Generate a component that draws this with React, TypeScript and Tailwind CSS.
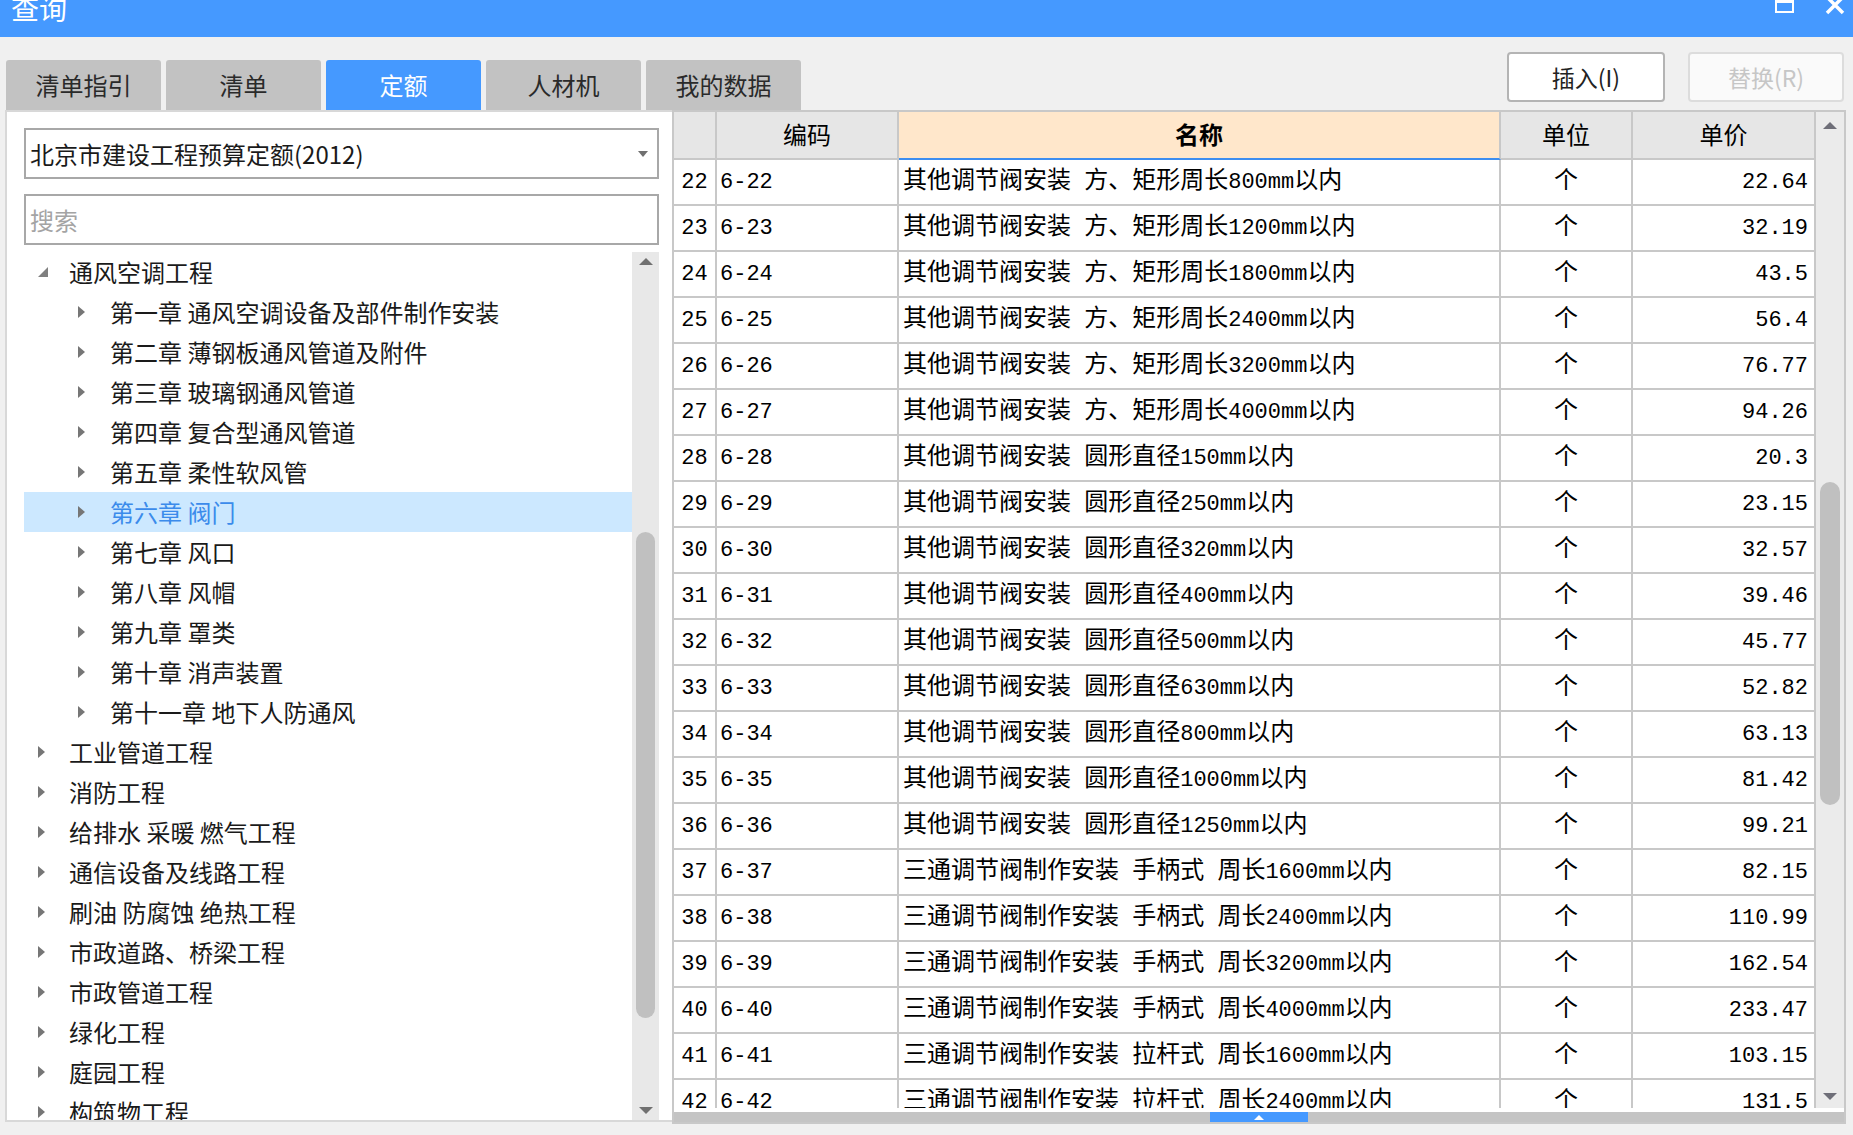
import React from "react";
import clsx from "clsx";

const TABS = ["清单指引", "清单", "定额", "人材机", "我的数据"];

type TreeNode = { label: string; level: 0 | 1; open?: boolean; selected?: boolean };

const TREE: TreeNode[] = [
  { label: "通风空调工程", level: 0, open: true },
  { label: "第一章 通风空调设备及部件制作安装", level: 1 },
  { label: "第二章 薄钢板通风管道及附件", level: 1 },
  { label: "第三章 玻璃钢通风管道", level: 1 },
  { label: "第四章 复合型通风管道", level: 1 },
  { label: "第五章 柔性软风管", level: 1 },
  { label: "第六章 阀门", level: 1, selected: true },
  { label: "第七章 风口", level: 1 },
  { label: "第八章 风帽", level: 1 },
  { label: "第九章 罩类", level: 1 },
  { label: "第十章 消声装置", level: 1 },
  { label: "第十一章 地下人防通风", level: 1 },
  { label: "工业管道工程", level: 0 },
  { label: "消防工程", level: 0 },
  { label: "给排水 采暖 燃气工程", level: 0 },
  { label: "通信设备及线路工程", level: 0 },
  { label: "刷油 防腐蚀 绝热工程", level: 0 },
  { label: "市政道路、桥梁工程", level: 0 },
  { label: "市政管道工程", level: 0 },
  { label: "绿化工程", level: 0 },
  { label: "庭园工程", level: 0 },
  { label: "构筑物工程", level: 0 },
];

const ROWS: [number, string, string][] = [
  [22, "其他调节阀安装 方、矩形周长800mm以内", "22.64"],
  [23, "其他调节阀安装 方、矩形周长1200mm以内", "32.19"],
  [24, "其他调节阀安装 方、矩形周长1800mm以内", "43.5"],
  [25, "其他调节阀安装 方、矩形周长2400mm以内", "56.4"],
  [26, "其他调节阀安装 方、矩形周长3200mm以内", "76.77"],
  [27, "其他调节阀安装 方、矩形周长4000mm以内", "94.26"],
  [28, "其他调节阀安装 圆形直径150mm以内", "20.3"],
  [29, "其他调节阀安装 圆形直径250mm以内", "23.15"],
  [30, "其他调节阀安装 圆形直径320mm以内", "32.57"],
  [31, "其他调节阀安装 圆形直径400mm以内", "39.46"],
  [32, "其他调节阀安装 圆形直径500mm以内", "45.77"],
  [33, "其他调节阀安装 圆形直径630mm以内", "52.82"],
  [34, "其他调节阀安装 圆形直径800mm以内", "63.13"],
  [35, "其他调节阀安装 圆形直径1000mm以内", "81.42"],
  [36, "其他调节阀安装 圆形直径1250mm以内", "99.21"],
  [37, "三通调节阀制作安装 手柄式 周长1600mm以内", "82.15"],
  [38, "三通调节阀制作安装 手柄式 周长2400mm以内", "110.99"],
  [39, "三通调节阀制作安装 手柄式 周长3200mm以内", "162.54"],
  [40, "三通调节阀制作安装 手柄式 周长4000mm以内", "233.47"],
  [41, "三通调节阀制作安装 拉杆式 周长1600mm以内", "103.15"],
  [42, "三通调节阀制作安装 拉杆式 周长2400mm以内", "131.5"],
];

function Caret({ dir, color = "#707070" }: { dir: "up" | "down" | "right" | "open"; color?: string }) {
  if (dir === "right")
    return (
      <svg width="8" height="12" viewBox="0 0 8 12">
        <path d="M0 0 L7 6 L0 12 Z" fill={color} />
      </svg>
    );
  if (dir === "open")
    return (
      <svg width="10" height="10" viewBox="0 0 10 10">
        <path d="M10 0 L10 10 L0 10 Z" fill={color} />
      </svg>
    );
  return (
    <svg width="14" height="7" viewBox="0 0 14 7">
      <path d={dir === "up" ? "M0 7 L7 0 L14 7 Z" : "M0 0 L14 0 L7 7 Z"} fill={color} />
    </svg>
  );
}

function TreeRow({ node }: { node: TreeNode }) {
  return (
    <div
      className={clsx(
        "h-[40px] shrink-0 flex items-center whitespace-nowrap",
        node.selected ? "bg-[#cce8ff] text-[#3b8beb]" : "text-[#1a1a1a]"
      )}
    >
      <div className={clsx("flex items-center", node.level === 0 ? "w-[45px] pl-[14px]" : "w-[86px] pl-[54px]")}>
        <Caret dir={node.open ? "open" : "right"} color={node.open ? "#808080" : "#767676"} />
      </div>
      <span className="text-[24px] leading-none">{node.label}</span>
    </div>
  );
}

// latin runs are set smaller so they take about half a CJK cell, like the grid's bitmap font
function Mixed({ text }: { text: string }) {
  return (
    <>
      {text.split(/([0-9A-Za-z. ]+)/).map((part, i) =>
        /^[0-9A-Za-z. ]+$/.test(part) ? (
          <span key={i} className="text-[22px] whitespace-pre">
            {part}
          </span>
        ) : (
          <span key={i}>{part}</span>
        )
      )}
    </>
  );
}

const CELL = "border-r-2 border-b-2 border-[#c8c8c8] flex items-center overflow-hidden whitespace-nowrap";

export default function App() {
  return (
    <div className="w-[1853px] h-[1135px] bg-[#f0f0f0] flex flex-col overflow-hidden font-['Noto_Sans_CJK_SC',sans-serif]">
      {/* title bar */}
      <div className="h-[37px] shrink-0 bg-[#4599ff] flex justify-between overflow-hidden">
        <div className="text-white text-[28px] leading-[28px] -mt-[6px] pl-[11px]">查询</div>
        <div className="flex items-start gap-[30px] pr-[7px]">
          <div className="w-[19px] h-[14px] border-2 border-t-[4px] border-white -mt-[1px]" />
          <svg width="22" height="22" viewBox="0 0 22 22" className="-mt-[6px]">
            <path d="M3 3 L19 19 M19 3 L3 19" stroke="white" strokeWidth="3.5" />
          </svg>
        </div>
      </div>

      {/* tabs + buttons */}
      <div className="h-[73px] shrink-0 flex justify-between">
        <div className="flex items-end gap-[5px] pl-[6px]">
          {TABS.map((t, i) => (
            <div
              key={t}
              className={clsx(
                "w-[155px] h-[50px] rounded-t-[3px] flex items-center justify-center text-[24px]",
                i === 2 ? "bg-[#4599ff] text-white" : "bg-[#c2c2c2] text-[#2a2a2a]"
              )}
            >
              {t}
            </div>
          ))}
        </div>
        <div className="flex items-start gap-[23px] pt-[15px] pr-[9px]">
          <button className="w-[158px] h-[50px] border-2 border-[#b4b4b4] rounded-[4px] bg-white text-[23px] text-[#222]">
            插入(I)
          </button>
          <button className="w-[156px] h-[50px] border-2 border-[#dcdcdc] rounded-[4px] bg-[#fafafa] text-[23px] text-[#c6c6c6]">
            替换(R)
          </button>
        </div>
      </div>

      {/* body */}
      <div className="flex pl-[5px] items-start">
        {/* left panel */}
        <div className="w-[667px] h-[1012px] bg-white border-l-2 border-t-2 border-b-2 border-[#d8d8d8] flex flex-col pl-[17px]">
          <div className="mt-[16px] w-[635px] h-[51px] border-2 border-[#a8a8a8] flex items-center justify-between pl-[4px] pr-[9px]">
            <span className="text-[24px] text-[#1a1a1a]">北京市建设工程预算定额(2012)</span>
            <svg width="10" height="6" viewBox="0 0 10 6">
              <path d="M0 0 L10 0 L5 6 Z" fill="#707070" />
            </svg>
          </div>
          <div className="mt-[15px] w-[635px] h-[51px] border-2 border-[#a8a8a8] flex items-center pl-[4px]">
            <span className="text-[24px] text-[#a4a4a4]">搜索</span>
          </div>
          <div className="mt-[7px] flex-1 flex min-h-0">
            <div className="w-[608px] flex flex-col overflow-hidden">
              {TREE.map((n) => (
                <TreeRow key={n.label} node={n} />
              ))}
            </div>
            <div className="w-[27px] bg-[#e8e8e8] flex flex-col items-center">
              <div className="mt-[6px] flex">
                <Caret dir="up" />
              </div>
              <div className="mt-[267px] w-[19px] h-[486px] rounded-full bg-[#c0c0c0]" />
              <div className="mt-[89px] flex">
                <Caret dir="down" />
              </div>
            </div>
          </div>
        </div>

        {/* table panel */}
        <div className="w-[1174px] h-[1014px] bg-white border-2 border-[#c8c8c8] flex flex-col">
          <div className="h-[996px] flex">
            <div className="flex flex-col font-['Liberation_Mono','Noto_Sans_CJK_SC',monospace] text-[24px] text-black">
              <div className="grid grid-cols-[43px_182px_602px_132px_183px] h-[48px] shrink-0">
                <div className={clsx(CELL, "bg-[#e6e6e6]")} />
                <div className={clsx(CELL, "bg-[#e6e6e6] justify-center pt-[5px]")}>编码</div>
                <div className="border-r-2 border-b-2 border-r-[#c8c8c8] border-b-[#3d8ef0] bg-[#ffe7cb] flex items-center justify-center font-bold pt-[5px]">
                  名称
                </div>
                <div className={clsx(CELL, "bg-[#e6e6e6] justify-center pt-[5px]")}>单位</div>
                <div className={clsx(CELL, "bg-[#e6e6e6] justify-center pt-[5px]")}>单价</div>
              </div>
              <div className="h-[948px] overflow-hidden">
                {ROWS.map(([n, name, price]) => (
                  <div key={n} className="grid grid-cols-[43px_182px_602px_132px_183px] h-[46px]">
                    <div className={clsx(CELL, "justify-center text-[22px]")}>{n}</div>
                    <div className={clsx(CELL, "pl-[3px] text-[22px]")}>6-{n}</div>
                    <div className={clsx(CELL, "pl-[4px]")}>
                      <Mixed text={name} />
                    </div>
                    <div className={clsx(CELL, "justify-center")}>个</div>
                    <div className={clsx(CELL, "justify-end pr-[6px] text-[22px]")}>{price}</div>
                  </div>
                ))}
              </div>
            </div>
            <div className="w-[28px] bg-[#ebebeb] flex flex-col items-center">
              <div className="mt-[10px] flex">
                <Caret dir="up" color="#6e6e78" />
              </div>
              <div className="mt-[353px] w-[20px] h-[323px] rounded-full bg-[#c0c0c0]" />
              <div className="mt-[288px] flex">
                <Caret dir="down" color="#6e6e78" />
              </div>
            </div>
          </div>
          <div className="h-[4px] bg-white" />
          <div className="h-[10px] bg-[#c4c4c4] flex pl-[536px]">
            <div className="w-[98px] h-full bg-[#4599ff] flex items-center justify-center">
              <svg width="10" height="5" viewBox="0 0 10 5">
                <path d="M0 5 L5 0 L10 5 Z" fill="white" />
              </svg>
            </div>
          </div>
        </div>
      </div>
    </div>
  );
}
